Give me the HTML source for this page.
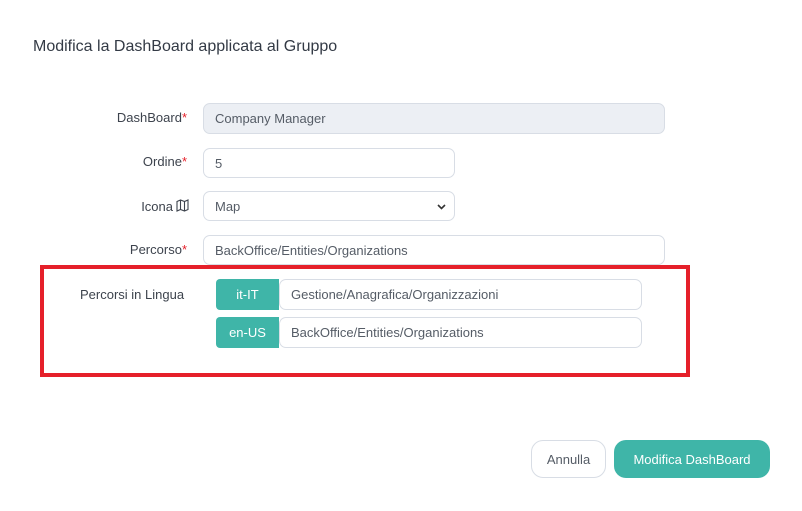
<!DOCTYPE html><html><head><style>
body{margin:0;width:802px;height:511px;background:#fff;font-family:"Liberation Sans",sans-serif;position:relative;overflow:hidden}
.a{position:absolute}
.t{left:33px;top:38px;font-size:16px;color:#333a45}
.l{font-size:13px;color:#3d434d;text-align:right;width:160px;left:27px}
.l b{color:#e5202a;font-weight:normal}
.i{border:1px solid #d8dde5;border-radius:7px;box-sizing:border-box;font-size:13px;color:#555c66;padding-left:11px;display:flex;align-items:center}
.bd{background:#3fb5a8;color:#fff;font-size:13px;border-radius:4px 0 0 4px;display:flex;align-items:center;justify-content:center}
</style></head><body>
<div class="a t">Modifica la DashBoard applicata al Gruppo</div>
<div class="a l" style="top:110px">DashBoard<b>*</b></div>
<div class="a i" style="left:203px;top:103px;width:462px;height:31px;background:#eceff4">Company Manager</div>
<div class="a l" style="top:154px">Ordine<b>*</b></div>
<div class="a i" style="left:203px;top:148px;width:252px;height:30px">5</div>
<div class="a l" style="top:199px;left:13px">Icona</div>
<svg class="a" style="left:176px;top:199px" width="13" height="13" viewBox="0 0 13 13" fill="none" stroke="#3d434d" stroke-width="1.1"><path d="M1 2.5 L4.5 1 L8.5 2.5 L12 1 V10.5 L8.5 12 L4.5 10.5 L1 12 Z M4.5 1 V10.5 M8.5 2.5 V12"/></svg>
<div class="a i" style="left:203px;top:191px;width:252px;height:30px">Map<svg class="a" style="right:8px;top:12px" width="9" height="6" viewBox="0 0 9 6"><path d="M1 1 L4.5 4.5 L8 1" fill="none" stroke="#333" stroke-width="1.6"/></svg></div>
<div class="a l" style="top:242px">Percorso<b>*</b></div>
<div class="a i" style="left:203px;top:235px;width:462px;height:30px">BackOffice/Entities/Organizations</div>
<div class="a" style="left:40px;top:265px;width:650px;height:112px;border:4px solid #e5202a;box-sizing:border-box"></div>
<div class="a" style="left:80px;top:287px;font-size:13px;color:#3d434d">Percorsi in Lingua</div>
<div class="a bd" style="left:216px;top:279px;width:63px;height:31px">it-IT</div>
<div class="a i" style="left:279px;top:279px;width:363px;height:31px">Gestione/Anagrafica/Organizzazioni</div>
<div class="a bd" style="left:216px;top:317px;width:63px;height:31px">en-US</div>
<div class="a i" style="left:279px;top:317px;width:363px;height:31px">BackOffice/Entities/Organizations</div>
<div class="a i" style="left:531px;top:440px;width:75px;height:38px;border-radius:12px;padding:0;justify-content:center">Annulla</div>
<div class="a" style="left:614px;top:440px;width:156px;height:38px;border-radius:12px;background:#3fb5a8;color:#fff;font-size:13px;display:flex;align-items:center;justify-content:center">Modifica DashBoard</div>
</body></html>
